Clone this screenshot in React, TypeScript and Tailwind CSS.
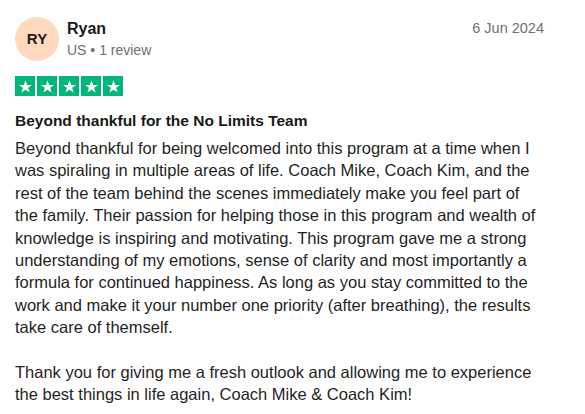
export default function App() {
  const stars = [0, 1, 2, 3, 4];

  return (
    <div className="w-[585px] h-[414px] bg-white overflow-hidden font-['Liberation_Sans',Arial,sans-serif] text-[#191919]">
      <div className="pl-[15px] pr-[41px] pt-[17px]">
        {/* Header */}
        <div className="flex items-start justify-between">
          <div className="flex items-start gap-[8px]">
            <div className="w-[44px] h-[44px] rounded-full bg-[#ffd8bd] flex items-center justify-center">
              <span className="text-[15px] font-bold text-[#1c1c1c]">RY</span>
            </div>
            <div className="flex flex-col pt-[2px]">
              <span className="text-[16px] font-bold leading-[20px]">Ryan</span>
              <span className="text-[14px] leading-[20px] mt-[1px] text-[#6f6f6f]">US • 1 review</span>
            </div>
          </div>
          <span className="text-[14.5px] leading-[20px] pt-[1px] text-[#6f6f6f]">6 Jun 2024</span>
        </div>

        {/* Rating */}
        <div className="flex gap-[2px] mt-[15px]">
          {stars.map((i) => (
            <div key={i} className="w-[20px] h-[20px] bg-[#00b67a] flex items-center justify-center">
              <svg viewBox="0 0 24 24" className="w-[15px] h-[15px]" fill="white">
                <path d="M12 2.5l2.75 7.1h7.55l-6.1 4.55 2.3 7.35L12 17l-6.5 4.5 2.3-7.35-6.1-4.55h7.55z" />
              </svg>
            </div>
          ))}
        </div>

        {/* Title */}
        <h2 className="text-[15.5px] font-bold leading-[20px] mt-[15px]">Beyond thankful for the No Limits Team</h2>

        {/* Body */}
        <p className="text-[16.5px] leading-[22.4px] mt-[6px] text-[#1f1f1f]">
          Beyond thankful for being welcomed into this program at a time when I was spiraling in multiple areas of life. Coach Mike, Coach Kim, and the rest of the team behind the scenes immediately make you feel part of the family. Their passion for helping those in this program and wealth of knowledge is inspiring and motivating. This program gave me a strong understanding of my emotions, sense of clarity and most importantly a formula for continued happiness. As long as you stay committed to the work and make it your number one priority (after breathing), the results take care of themself.
        </p>
        <p className="text-[16.5px] leading-[22.4px] mt-[22.4px] text-[#1f1f1f]">
          Thank you for giving me a fresh outlook and allowing me to experience the best things in life again, Coach Mike &amp; Coach Kim!
        </p>
      </div>
    </div>
  );
}
